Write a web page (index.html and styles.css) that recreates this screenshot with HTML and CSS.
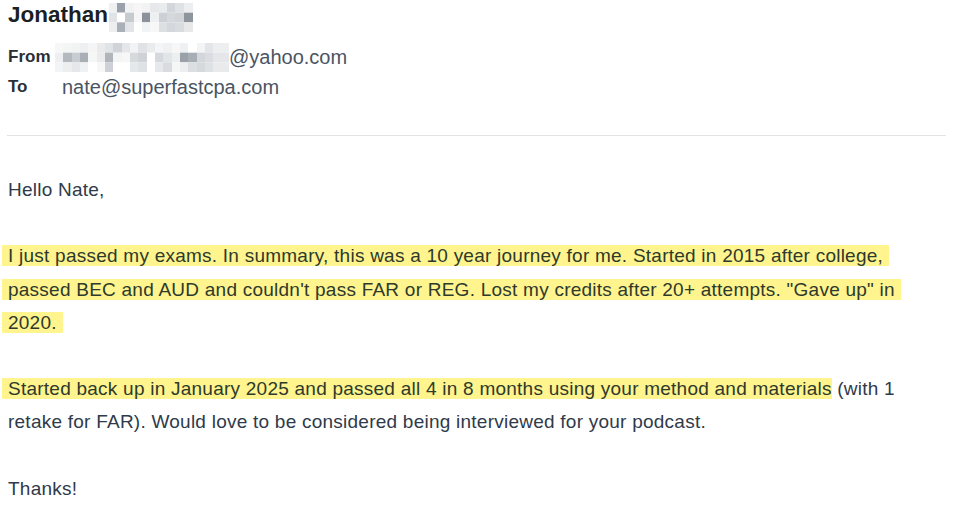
FILE: index.html
```html
<!DOCTYPE html>
<html>
<head>
<meta charset="utf-8">
<link rel="stylesheet" href="styles.css">
</head>
<body>
<div class="mail">
  <header class="head">
    <h1 class="sender"><span class="sender-name">Jonathan</span>
      <svg class="mosaic name-mosaic" width="84" height="29" viewBox="0 0 84 30" preserveAspectRatio="none">
        <rect x="0" y="0" width="8" height="10" fill="#eef0f2"/>
        <rect x="8" y="0" width="8" height="10" fill="#9aa1aa"/>
        <rect x="16" y="0" width="9" height="10" fill="#f1f2f3"/>
        <rect x="25" y="0" width="8" height="10" fill="#f6f6f6"/>
        <rect x="33" y="0" width="8" height="10" fill="#f3f3f4"/>
        <rect x="41" y="0" width="9" height="10" fill="#e6e8eb"/>
        <rect x="50" y="0" width="8" height="10" fill="#e9ebed"/>
        <rect x="58" y="0" width="8" height="10" fill="#d3d7db"/>
        <rect x="66" y="0" width="9" height="10" fill="#dfe2e5"/>
        <rect x="75" y="0" width="9" height="10" fill="#eceef0"/>
        <rect x="0" y="10" width="8" height="10" fill="#e1e4e7"/>
        <rect x="8" y="10" width="8" height="10" fill="#ffffff"/>
        <rect x="16" y="10" width="9" height="10" fill="#c6cbd0"/>
        <rect x="25" y="10" width="8" height="10" fill="#f5f5f5"/>
        <rect x="33" y="10" width="8" height="10" fill="#8b929b"/>
        <rect x="41" y="10" width="9" height="10" fill="#eef0f1"/>
        <rect x="50" y="10" width="8" height="10" fill="#cdd1d5"/>
        <rect x="58" y="10" width="8" height="10" fill="#d6d9dc"/>
        <rect x="66" y="10" width="9" height="10" fill="#d1d5d9"/>
        <rect x="75" y="10" width="9" height="10" fill="#8e959d"/>
        <rect x="0" y="20" width="8" height="10" fill="#eceef0"/>
        <rect x="8" y="20" width="8" height="10" fill="#aab0b7"/>
        <rect x="16" y="20" width="9" height="10" fill="#e2e4e7"/>
        <rect x="25" y="20" width="8" height="10" fill="#ffffff"/>
        <rect x="33" y="20" width="8" height="10" fill="#f2f3f4"/>
        <rect x="41" y="20" width="9" height="10" fill="#f7f7f8"/>
        <rect x="50" y="20" width="8" height="10" fill="#dde0e3"/>
        <rect x="58" y="20" width="8" height="10" fill="#d4d8dc"/>
        <rect x="66" y="20" width="9" height="10" fill="#d9dcdf"/>
        <rect x="75" y="20" width="9" height="10" fill="#e6e8ea"/>
      </svg>
    </h1>
    <div class="meta">
      <div class="meta-row">
        <span class="meta-label">From</span>
        <span class="meta-value">
          <svg class="mosaic" width="174" height="29" viewBox="0 0 174 30" preserveAspectRatio="none">
            <rect x="0" y="0" width="8" height="10" fill="#f7f7f7"/>
            <rect x="8" y="0" width="9" height="10" fill="#f4f5f5"/>
            <rect x="17" y="0" width="8" height="10" fill="#f2f3f3"/>
            <rect x="25" y="0" width="8" height="10" fill="#eeeff0"/>
            <rect x="33" y="0" width="9" height="10" fill="#f5f5f6"/>
            <rect x="42" y="0" width="8" height="10" fill="#e8eaec"/>
            <rect x="50" y="0" width="8" height="10" fill="#e1e4e7"/>
            <rect x="58" y="0" width="9" height="10" fill="#d0d4d8"/>
            <rect x="67" y="0" width="8" height="10" fill="#e4e6e9"/>
            <rect x="75" y="0" width="8" height="10" fill="#f2f3f4"/>
            <rect x="83" y="0" width="9" height="10" fill="#e0e2e5"/>
            <rect x="92" y="0" width="8" height="10" fill="#e9ebed"/>
            <rect x="100" y="0" width="8" height="10" fill="#f4f5f6"/>
            <rect x="108" y="0" width="9" height="10" fill="#f0f1f2"/>
            <rect x="117" y="0" width="8" height="10" fill="#f7f7f7"/>
            <rect x="125" y="0" width="8" height="10" fill="#eef0f1"/>
            <rect x="133" y="0" width="9" height="10" fill="#ffffff"/>
            <rect x="142" y="0" width="8" height="10" fill="#f3f4f5"/>
            <rect x="150" y="0" width="8" height="10" fill="#e3e5e8"/>
            <rect x="158" y="0" width="16" height="10" fill="#eceef0"/>
            <rect x="0" y="10" width="8" height="10" fill="#eeeff0"/>
            <rect x="8" y="10" width="9" height="10" fill="#b4b9bf"/>
            <rect x="17" y="10" width="8" height="10" fill="#c9cdd1"/>
            <rect x="25" y="10" width="8" height="10" fill="#a9afb6"/>
            <rect x="33" y="10" width="9" height="10" fill="#f5f6f6"/>
            <rect x="42" y="10" width="8" height="10" fill="#e9ebed"/>
            <rect x="50" y="10" width="8" height="10" fill="#b0b5bb"/>
            <rect x="58" y="10" width="9" height="10" fill="#f3f4f4"/>
            <rect x="67" y="10" width="8" height="10" fill="#f7f7f7"/>
            <rect x="75" y="10" width="8" height="10" fill="#d7dadd"/>
            <rect x="83" y="10" width="9" height="10" fill="#cfd3d7"/>
            <rect x="92" y="10" width="8" height="10" fill="#ffffff"/>
            <rect x="100" y="10" width="8" height="10" fill="#d5d8dc"/>
            <rect x="108" y="10" width="9" height="10" fill="#e2e5e8"/>
            <rect x="117" y="10" width="8" height="10" fill="#eceef0"/>
            <rect x="125" y="10" width="8" height="10" fill="#9aa1a9"/>
            <rect x="133" y="10" width="9" height="10" fill="#a8aeb5"/>
            <rect x="142" y="10" width="8" height="10" fill="#d3d6da"/>
            <rect x="150" y="10" width="8" height="10" fill="#d9dce0"/>
            <rect x="158" y="10" width="16" height="10" fill="#e4e6e9"/>
            <rect x="0" y="20" width="8" height="10" fill="#f3f4f5"/>
            <rect x="8" y="20" width="9" height="10" fill="#eceef0"/>
            <rect x="17" y="20" width="8" height="10" fill="#e5e7ea"/>
            <rect x="25" y="20" width="8" height="10" fill="#f0f1f2"/>
            <rect x="33" y="20" width="9" height="10" fill="#ffffff"/>
            <rect x="42" y="20" width="8" height="10" fill="#f7f7f7"/>
            <rect x="50" y="20" width="8" height="10" fill="#cdd1d5"/>
            <rect x="58" y="20" width="9" height="10" fill="#ffffff"/>
            <rect x="67" y="20" width="8" height="10" fill="#ffffff"/>
            <rect x="75" y="20" width="8" height="10" fill="#e5e8ea"/>
            <rect x="83" y="20" width="9" height="10" fill="#dfe2e5"/>
            <rect x="92" y="20" width="8" height="10" fill="#ffffff"/>
            <rect x="100" y="20" width="8" height="10" fill="#e6e8eb"/>
            <rect x="108" y="20" width="9" height="10" fill="#d8dbdf"/>
            <rect x="117" y="20" width="8" height="10" fill="#f5f6f6"/>
            <rect x="125" y="20" width="8" height="10" fill="#eceef0"/>
            <rect x="133" y="20" width="9" height="10" fill="#dcdfe2"/>
            <rect x="142" y="20" width="8" height="10" fill="#d5d9dc"/>
            <rect x="150" y="20" width="8" height="10" fill="#dee1e4"/>
            <rect x="158" y="20" width="16" height="10" fill="#e8eaec"/>
          </svg>@yahoo.com</span>
      </div>
      <div class="meta-row">
        <span class="meta-label">To</span>
        <span class="meta-value">nate@superfastcpa.com</span>
      </div>
    </div>
  </header>
  <hr class="divider">
  <div class="body">
    <p>Hello Nate,</p>
    <p><span class="hl">I just passed my exams. In summary, this was a 10 year journey for me. Started in 2015 after college, passed BEC and AUD and couldn't pass FAR or REG. Lost my credits after 20+ attempts. "Gave up" in 2020.</span></p>
    <p><span class="hl hl-open">Started back up in January 2025 and passed all 4 in 8 months using your method and materials</span> (with 1 retake for FAR). Would love to be considered being interviewed for your podcast.</p>
    <p>Thanks!</p>
  </div>
</div>
</body>
</html>
```
FILE: styles.css
```css
html, body {
  margin: 0;
  padding: 0;
  background: #ffffff;
}

body {
  font-family: "Liberation Sans", Arial, sans-serif;
}

.mail {
  padding: 0 10px 0 8px;
}

.sender {
  margin: 0;
  font-size: 22.5px;
  font-weight: bold;
  line-height: 30px;
  color: #1b1f24;
  display: flex;
  align-items: flex-start;
}

.mosaic {
  display: block;
  flex: none;
}

.name-mosaic {
  margin-left: 1px;
  margin-top: 3px;
}

.meta {
  margin-top: 10px;
}

.meta-row {
  display: flex;
  align-items: center;
  height: 30px;
}

.meta-label {
  width: 54px;
  font-size: 17px;
  font-weight: bold;
  color: #2a2f36;
}

.meta-value {
  display: flex;
  align-items: center;
  font-size: 20px;
  color: #4a5463;
}

.meta-value .mosaic {
  margin-left: -7px;
}

.divider {
  margin: 33px 0 0 -1px;
  border: 0;
  border-top: 1px solid #e3e3e3;
  height: 0;
}

.body {
  padding-top: 37px;
  font-size: 19px;
  letter-spacing: 0.24px;
  line-height: 33.2px;
  color: #2f3a4a;
}

.body p {
  margin: 0 0 33.2px 0;
}

.body p:last-child {
  margin-bottom: 0;
}

.hl {
  background: #fff48e;
  padding: 0;
  box-shadow: 6px 0 0 #fff48e, -6px 0 0 #fff48e;
  -webkit-box-decoration-break: clone;
  box-decoration-break: clone;
  color: #2d3a2c;
}

.hl-open {
  box-shadow: -6px 0 0 #fff48e;
}
```
